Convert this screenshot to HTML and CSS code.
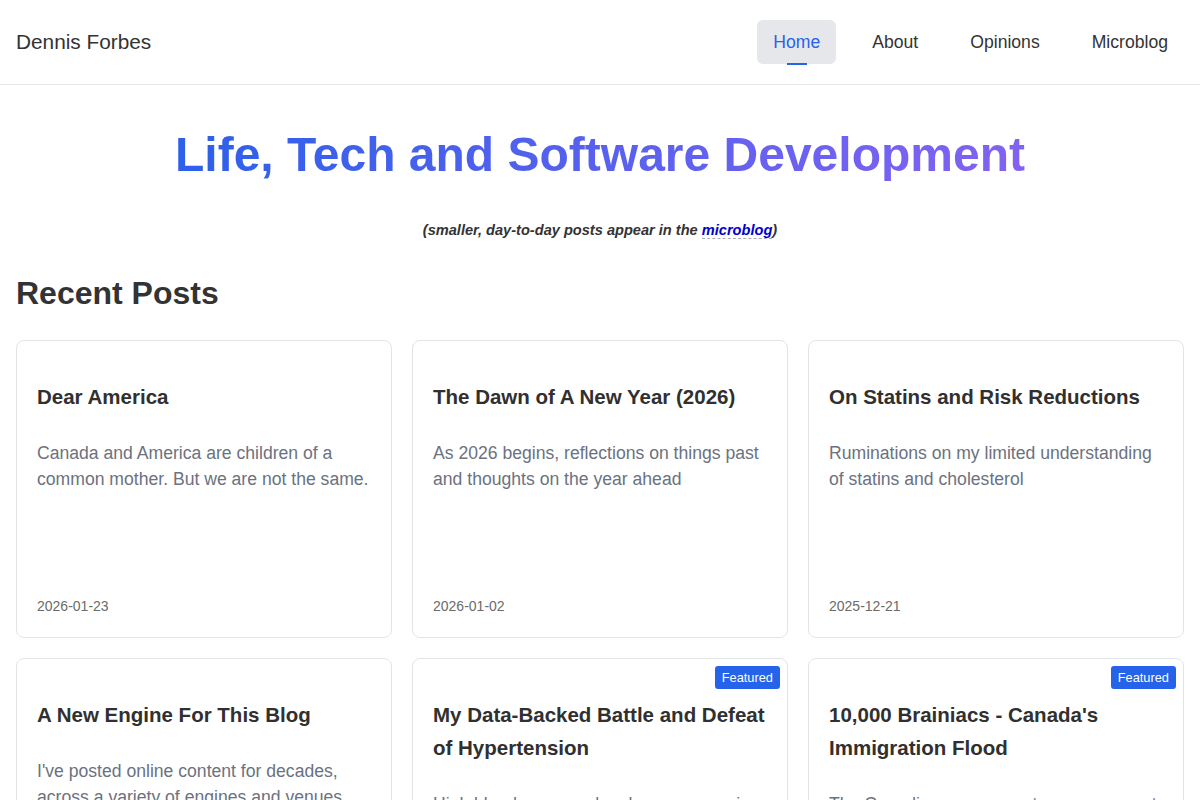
FILE: index.html
```html
<!DOCTYPE html>
<html lang="en">
<head>
<meta charset="utf-8">
<title>Dennis Forbes</title>
<link rel="stylesheet" href="styles.css">
</head>
<body>
<header class="site-header">
  <a class="brand" href="#">Dennis Forbes</a>
  <nav class="nav">
    <a class="nav-item active" href="#">Home</a>
    <a class="nav-item" href="#">About</a>
    <a class="nav-item" href="#">Opinions</a>
    <a class="nav-item" href="#">Microblog</a>
  </nav>
</header>
<main class="main">
  <section class="hero">
    <h1 class="hero-title"><span class="gradient">Life, Tech and Software Development</span></h1>
    <p class="hero-sub">(smaller, day-to-day posts appear in the <a class="micro-link" href="#">microblog</a>)</p>
  </section>
  <h2 class="section-title">Recent Posts</h2>
  <div class="grid">
    <article class="card">
      <h3 class="card-title">Dear America</h3>
      <p class="card-desc">Canada and America are children of a common mother. But we are not the same.</p>
      <div class="card-date">2026-01-23</div>
    </article>
    <article class="card">
      <h3 class="card-title">The Dawn of A New Year (2026)</h3>
      <p class="card-desc">As 2026 begins, reflections on things past and thoughts on the year ahead</p>
      <div class="card-date">2026-01-02</div>
    </article>
    <article class="card">
      <h3 class="card-title">On Statins and Risk Reductions</h3>
      <p class="card-desc">Ruminations on my limited understanding of statins and cholesterol</p>
      <div class="card-date">2025-12-21</div>
    </article>
    <article class="card">
      <h3 class="card-title">A New Engine For This Blog</h3>
      <p class="card-desc">I've posted online content for decades, across a variety of engines and venues.</p>
      <div class="card-date">2025-12-01</div>
    </article>
    <article class="card">
      <span class="badge">Featured</span>
      <h3 class="card-title">My Data-Backed Battle and Defeat of Hypertension</h3>
      <p class="card-desc">High blood pressure has been an ongoing issue in my life, until it wasn't.</p>
      <div class="card-date">2025-10-14</div>
    </article>
    <article class="card">
      <span class="badge">Featured</span>
      <h3 class="card-title">10,000 Brainiacs - Canada's Immigration Flood</h3>
      <p class="card-desc">The Canadian government announces yet another program for talent.</p>
      <div class="card-date">2025-09-30</div>
    </article>
  </div>
</main>
</body>
</html>
```
FILE: styles.css
```css
* { box-sizing: border-box; }
html, body { margin: 0; padding: 0; }
body {
  font-family: "Liberation Sans", Arial, sans-serif;
  color: #333;
  background: #fff;
}
a { text-decoration: none; }

.site-header {
  display: flex;
  align-items: center;
  justify-content: space-between;
  height: 85px;
  padding: 0 16px;
  border-bottom: 1px solid #e5e7eb;
}
.brand {
  font-size: 20.8px;
  color: #333;
}
.nav {
  display: flex;
  gap: 20px;
}
.nav-item {
  position: relative;
  display: block;
  font-size: 17.6px;
  line-height: 44px;
  padding: 0 16px;
  border-radius: 6px;
  color: #333;
}
.nav-item.active {
  background: #e5e7eb;
  color: #2563eb;
}
.nav-item.active::after {
  content: "";
  position: absolute;
  left: 50%;
  bottom: -1px;
  width: 20px;
  height: 2px;
  margin-left: -10px;
  background: #2563eb;
}

.main {
  padding: 0 16px 40px;
}
.hero {
  text-align: center;
  padding-top: 38px;
}
.hero-title {
  margin: 0;
  font-size: 48px;
  line-height: 64px;
  font-weight: 700;
}
.gradient {
  background: linear-gradient(90deg, #2d60ea, #8362f2);
  -webkit-background-clip: text;
  background-clip: text;
  color: transparent;
}
.hero-sub {
  margin: 32px 0 0;
  font-size: 14.6px;
  line-height: 22px;
  font-style: italic;
  font-weight: 700;
  color: #333;
}
.micro-link {
  color: #0000cc;
  border-bottom: 1px dashed #aab;
}
.section-title {
  margin: 32px 0 27px;
  font-size: 32px;
  line-height: 40px;
  font-weight: 700;
  color: #333;
}

.grid {
  display: grid;
  grid-template-columns: repeat(3, 1fr);
  gap: 20px;
}
.card {
  position: relative;
  display: flex;
  flex-direction: column;
  min-height: 298px;
  padding: 39px 20px 20px;
  border: 1px solid #e2e4e8;
  border-radius: 8px;
  background: #fff;
}
.badge {
  position: absolute;
  top: 7px;
  right: 7px;
  padding: 0 7px;
  font-size: 12.8px;
  line-height: 23px;
  color: #fff;
  background: #2563eb;
  border-radius: 3px;
}
.card-title {
  margin: 0;
  font-size: 20.5px;
  line-height: 33px;
  font-weight: 700;
  color: #303030;
}
.card-desc {
  margin: 27px 0 0;
  font-size: 17.6px;
  line-height: 26.4px;
  color: #6b7280;
}
.card-date {
  margin-top: auto;
  font-size: 14px;
  line-height: 21px;
  color: #6b6b6b;
}
```
